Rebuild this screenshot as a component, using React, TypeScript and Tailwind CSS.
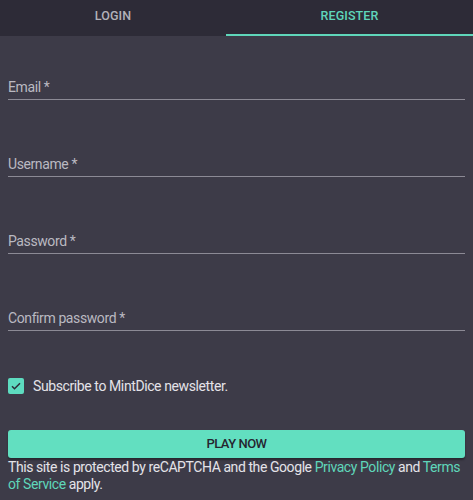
import React, { useState } from "react";

const FIELDS = ["Email", "Username", "Password", "Confirm password"];

function Field({ label, type, first }: { label: string; type: string; first?: boolean }) {
  return (
    <label className={`block ${first ? "pt-[41px]" : "pt-[54px]"}`}>
      <span className="block text-[14px] leading-[20px] tracking-[-0.4px] text-[#bab9c1]">{label} *</span>
      <input
        type={type}
        className="block h-[3px] w-full border-b border-[#8c8a95] bg-transparent p-0 outline-none"
      />
    </label>
  );
}

export default function App() {
  const [subscribe, setSubscribe] = useState(true);

  return (
    <div className="min-h-[500px] bg-[#3d3b48] font-['Roboto',sans-serif]">
      {/* tabs */}
      <div className="flex h-[36px] bg-[#2d2b37]">
        <button className="w-[226px] pb-[3px] text-[12.5px] font-medium tracking-[0.1px] text-[#b3b2b9]">
          LOGIN
        </button>
        <button className="flex-1 border-b-2 border-[#5fd6ba] pb-[1px] text-[12.5px] font-medium tracking-[0.1px] text-[#5fd6ba]">
          REGISTER
        </button>
      </div>

      <div className="px-[8px]">
        {FIELDS.map((f, i) => (
          <Field
            key={f}
            first={i === 0}
            label={f}
            type={f.toLowerCase().includes("password") ? "password" : "text"}
          />
        ))}

        <label className="mt-[45px] flex cursor-pointer items-center gap-[9px]">
          <span
            onClick={() => setSubscribe(!subscribe)}
            className="flex h-[16px] w-[16px] items-center justify-center rounded-[2px] bg-[#5edcc0]"
          >
            {subscribe && (
              <svg width="12" height="12" viewBox="0 0 24 24" fill="none">
                <path d="M4 12.5l5 5L20 6.5" stroke="#2d2b37" strokeWidth="3" />
              </svg>
            )}
          </span>
          <span className="text-[14px] leading-[20px] tracking-[-0.4px] text-[#e4e3e8]">
            Subscribe to MintDice newsletter.
          </span>
        </label>

        <button className="mt-[34px] h-[28px] w-full rounded-[3px] bg-[#62dfc0] text-[13px] font-medium tracking-[-0.5px] text-[#26252f] shadow-[0_2px_2px_rgba(0,0,0,0.35)]">
          PLAY NOW
        </button>

        <p className="mt-[1px] text-[14px] leading-[17px] tracking-[-0.42px] text-[#e4e3e8]">
          This site is protected by reCAPTCHA and the Google{" "}
          <a className="text-[#5fd6ba]">Privacy Policy</a> and{" "}
          <a className="text-[#5fd6ba]">Terms</a> <a className="text-[#5fd6ba]">of Service</a> apply.
        </p>
      </div>
    </div>
  );
}
